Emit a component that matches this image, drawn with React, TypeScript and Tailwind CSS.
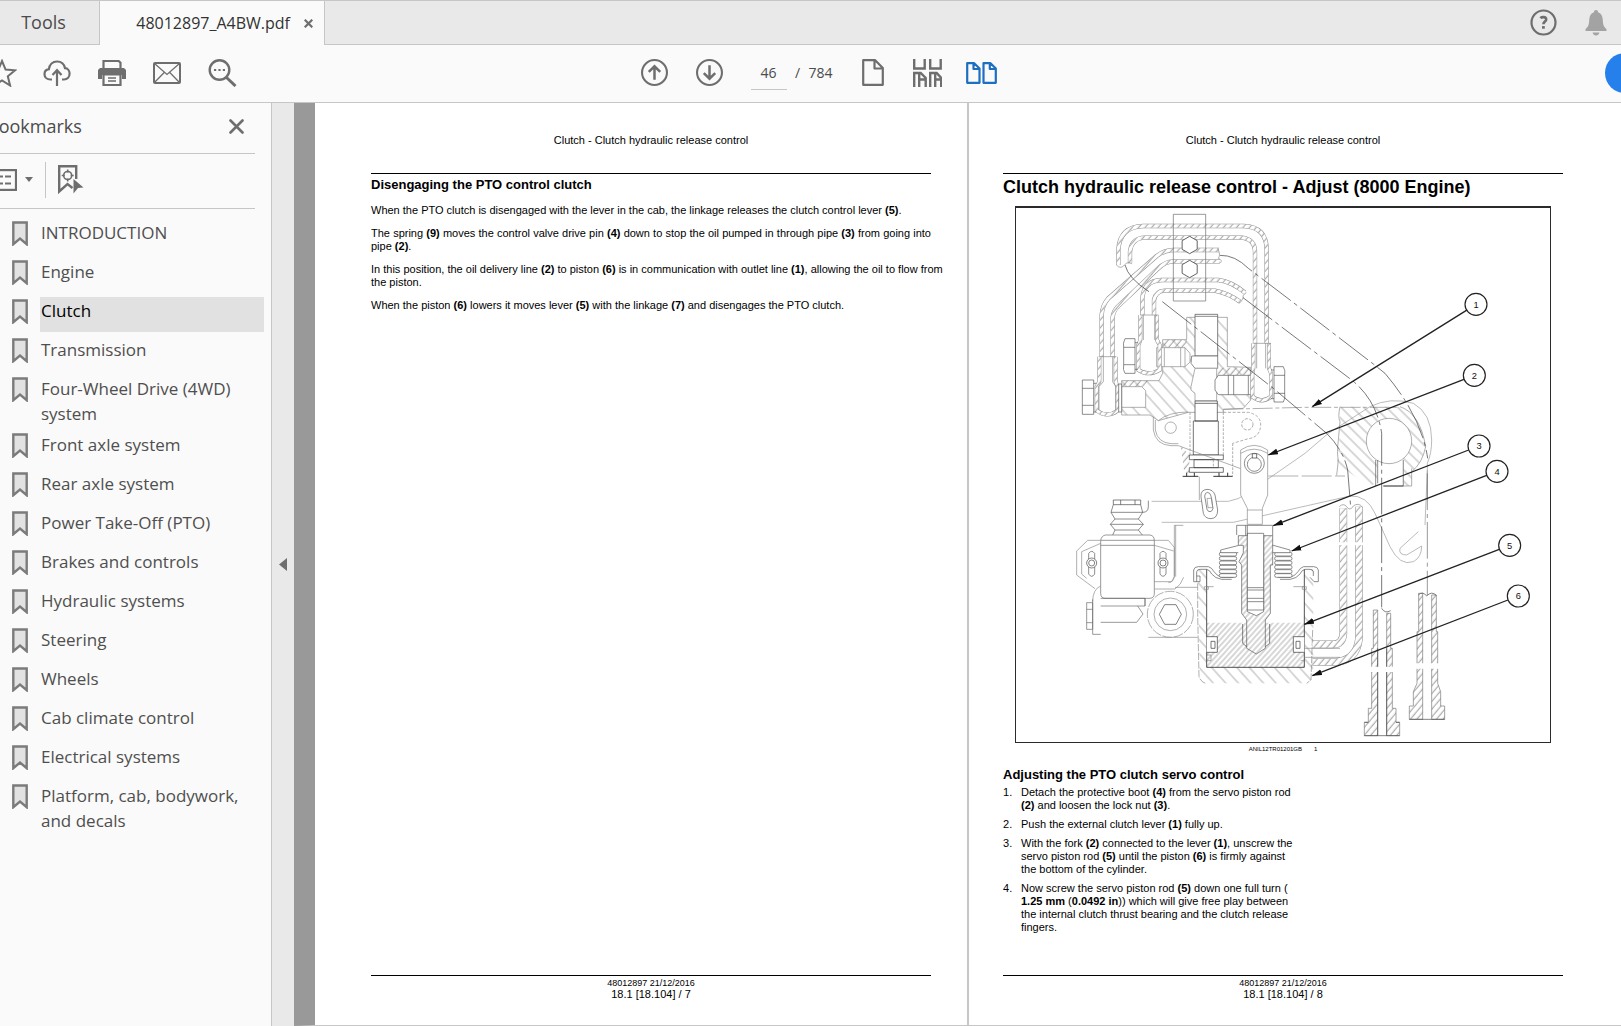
import type { ReactNode } from "react"

const BOOKMARKS = [
  "INTRODUCTION",
  "Engine",
  "Clutch",
  "Transmission",
  "Four-Wheel Drive (4WD) system",
  "Front axle system",
  "Rear axle system",
  "Power Take-Off (PTO)",
  "Brakes and controls",
  "Hydraulic systems",
  "Steering",
  "Wheels",
  "Cab climate control",
  "Electrical systems",
  "Platform, cab, bodywork, and decals",
]

const CALLOUTS = [
  { n: 1, x: 1383, y: 313, tx: 892, ty: 620 },
  { n: 2, x: 1378, y: 526, tx: 760, ty: 765 },
  { n: 3, x: 1392, y: 738, tx: 775, ty: 977 },
  { n: 4, x: 1446, y: 814, tx: 830, ty: 1053 },
  { n: 5, x: 1484, y: 1036, tx: 868, ty: 1273 },
  { n: 6, x: 1510, y: 1188, tx: 892, ty: 1427 },
]

function IconButton({ label, className = "", children }: { label: string; className?: string; children: ReactNode }) {
  return (
    <button type="button" aria-label={label} className={`flex shrink-0 items-center justify-center text-[#6e6e6e] ${className}`}>
      {children}
    </button>
  )
}

function TabBar() {
  return (
    <div className="flex h-[45px] shrink-0 border-y border-[#c6c6c6] bg-[#e9e9e9]">
      <button type="button" className="w-[100px] border-r border-[#c6c6c6] pr-3 text-center text-[18px] text-[#4b4b4b]">
        Tools
      </button>
      <div className="-mb-px flex w-[225px] items-center justify-end gap-[14px] border-r border-[#c6c6c6] bg-[#fafafa] pr-[11px]">
        <span className="text-[16px] text-[#323232]">48012897_A4BW.pdf</span>
        <IconButton label="Close tab">
          <svg width="9" height="9" viewBox="0 0 9 9" stroke="currentColor" strokeWidth="2.2"><path d="M.7.7l7.6 7.6M8.300.7L.7 8.300" /></svg>
        </IconButton>
      </div>
      <div className="ml-auto flex items-center gap-7 pr-[14px]">
        <IconButton label="Help">
          <svg width="27" height="27" viewBox="0 0 27 27" fill="none" stroke="currentColor" strokeWidth="2.2">
            <circle cx="13.5" cy="13.5" r="12" />
            <path d="M10.4 9.2c1.2-1.3 5.6-1.9 5.8 1.1.1 2.2-2.8 2.3-2.8 5" strokeWidth="2.6" />
            <path d="M12 18.4h2.8" strokeWidth="2.6" />
          </svg>
        </IconButton>
        <IconButton label="Notifications">
          <svg width="22" height="26" viewBox="0 0 22 26" fill="#a3a3a3">
            <path d="M11 0c1.300 0 2 .9 2 2.200 3.200 1 4.600 3.600 4.800 7.800.2 5.200 1 6.600 3.700 9V21H.5v-2c2.700-2.400 3.500-3.800 3.700-9C4.400 5.800 5.800 3.200 9 2.200 9 .9 9.700 0 11 0z" />
            <path d="M7.500 22.500h7c-.6 2-1.800 3-3.500 3s-2.900-1-3.500-3z" />
          </svg>
        </IconButton>
      </div>
    </div>
  )
}

function Toolbar() {
  return (
    <div className="flex h-[58px] shrink-0 items-center overflow-hidden border-b border-[#c6c6c6] bg-[#fafafa] pb-[2px]">
      <div className="flex flex-1">
        <div className="-ml-[26px] flex">
          <IconButton label="Add to favourites" className="w-[55px]">
            <svg width="30" height="28" viewBox="0 0 30 28" fill="none" stroke="currentColor" strokeWidth="2">
              <path d="M15 2l3.600 8.600 9.400.7-7.200 6 2.300 9.200L15 21.500l-8.100 5 2.300-9.200-7.200-6 9.400-.7z" />
            </svg>
          </IconButton>
          <IconButton label="Upload" className="w-[55px]">
            <svg width="28" height="28" viewBox="0 0 28 28" fill="none" stroke="currentColor" strokeWidth="2.200">
              <path d="M9 20.500H7.500C4 20.500 1.500 18.200 1.500 15.200c0-2.800 2-4.700 4.400-5C6.500 5.500 9.800 2.500 14 2.500c4 0 7.200 2.500 8 6.700 2.700.2 4.600 2.500 4.600 5.400 0 3.200-2.300 5.900-5.600 5.900h-2" />
              <path d="M14 27V11.500M9.500 16l4.500-4.800 4.500 4.800" />
            </svg>
          </IconButton>
          <IconButton label="Print" className="w-[55px]">
            <svg width="28" height="28" viewBox="0 0 28 28" fill="none" stroke="currentColor" strokeWidth="2.200">
              <path d="M5.500 9V2h15.200l1.800 1.800V9" />
              <path d="M2 9h24l2 2v9h-4v-4H4v4H0v-9z" fill="currentColor" stroke="none" />
              <path d="M5.500 15.500V26h17V15.500z" fill="#fafafa" />
              <path d="M10 19h8M10 22h8" strokeWidth="1.300" />
            </svg>
          </IconButton>
          <IconButton label="Email" className="w-[55px]">
            <svg width="28" height="22" viewBox="0 0 28 22" fill="none" stroke="currentColor">
              <rect x="1" y="1" width="26" height="20" rx="1" strokeWidth="2" />
              <path d="M1.500 1.500L14 12.500l12.500-11M1.500 20.500l9.700-10M26.500 20.500l-9.700-10" strokeWidth="1.300" />
            </svg>
          </IconButton>
          <IconButton label="Find" className="w-[57px]">
            <svg width="29" height="28" viewBox="0 0 29 28" fill="none" stroke="currentColor">
              <circle cx="11.500" cy="11" r="9.800" strokeWidth="2.400" />
              <path d="M18.500 18.500l9 8.500" strokeWidth="3" />
              <path d="M6 11h2.200M10.400 11h2.200M14.800 11H17" strokeWidth="2" />
            </svg>
          </IconButton>
        </div>
      </div>

      <div className="flex items-center gap-7 pl-4">
        <IconButton label="Previous page">
          <svg width="27" height="27" viewBox="0 0 26 26" fill="none" stroke="currentColor" strokeWidth="2">
            <circle cx="13" cy="13" r="12" />
            <path d="M13 20V7.500M7.500 12.500L13 7l5.500 5.500" strokeWidth="2.400" />
          </svg>
        </IconButton>
        <IconButton label="Next page">
          <svg width="27" height="27" viewBox="0 0 26 26" fill="none" stroke="currentColor" strokeWidth="2">
            <circle cx="13" cy="13" r="12" />
            <path d="M13 6v12.500M7.500 13.500L13 19l5.500-5.500" strokeWidth="2.400" />
          </svg>
        </IconButton>
        <div className="flex w-[82px] items-center justify-between text-[14px] text-[#4b4b4b]">
          <input aria-label="Page number" defaultValue="46" className="h-[35px] w-[36px] border-b border-[#c6c6c6] bg-transparent text-center" />
          <span>/</span>
          <span>784</span>
        </div>
        <IconButton label="Single page" className="w-6">
          <svg width="22" height="27" viewBox="0 0 22 27" fill="none" stroke="currentColor" strokeWidth="2.200" strokeLinejoin="round">
            <path d="M1.200 1.200h12L20.800 9v16.800H1.200zM12.500 1.500v8h8" />
          </svg>
        </IconButton>
        <IconButton label="Two page scrolling">
          <svg width="29" height="28" viewBox="0 0 29 28" fill="none" stroke="currentColor" strokeWidth="2.400">
            <path d="M1.200 0v9.500h10.500V0M17.200 0v9.500h10.500V0M1.200 28V14h6.500l5 5v9M6.200 28V14.500M6.500 20.500h5.500M17.200 28V14h6.500l4.500 5v9M22.200 28V14.500M22.500 20.500h5" />
          </svg>
        </IconButton>
        <button type="button" aria-label="Two page view" aria-pressed="true" className="-ml-1 text-[#1d6fc0]">
          <svg width="31" height="22" viewBox="0 0 31 22" fill="none" stroke="currentColor" strokeWidth="2.200" strokeLinejoin="round">
            <path d="M1.200 1.200h7L13.500 6.500v14.300H1.200zM7.500 1.500V7h6M17.500 1.200h7l5.300 5.300v14.300H17.500zM23.800 1.500V7h6" />
          </svg>
        </button>
      </div>

      <div className="flex flex-1 justify-end">
        <button type="button" aria-label="Share" className="-mr-6 size-10 rounded-full bg-[#2680eb]" />
      </div>
    </div>
  )
}

function Sidebar() {
  return (
    <aside className="w-[271px] shrink-0 overflow-hidden bg-[#fafafa] pr-[7px]">
      <div className="mr-[9px] flex h-[51px] items-center justify-between border-b border-[#c6c6c6] pr-[11px] pb-[3px]">
        <h2 className="-ml-[13px] text-[18px] text-[#4b4b4b]">Bookmarks</h2>
        <IconButton label="Close bookmarks">
          <svg width="15" height="15" viewBox="0 0 15 15" stroke="currentColor" strokeWidth="2.600" strokeLinecap="round"><path d="M1.500 1.500l12 12M13.500 1.500l-12 12" /></svg>
        </IconButton>
      </div>
      <div className="mr-[9px] flex h-[55px] items-center border-b border-[#c6c6c6] pb-[3px]">
        <IconButton label="Bookmark options" className="-ml-2 h-9 gap-2 border-r border-[#c6c6c6] pr-3">
          <svg width="25" height="22" viewBox="0 0 25 22" fill="none" stroke="currentColor" strokeWidth="2.200">
            <rect x="1" y="1.100" width="23" height="19.800" />
            <path d="M7 7.500h4M13 7.500h6M7 14.500h4M13 14.500h6" />
          </svg>
          <svg width="8" height="5" viewBox="0 0 8 5" fill="currentColor"><path d="M0 0h8L4 5z" /></svg>
        </IconButton>
        <IconButton label="Find current bookmark" className="ml-3">
          <svg width="26" height="29" viewBox="0 0 26 29" fill="none" stroke="currentColor">
            <path d="M18.200 14V1.200h-17V26.500L9.500 19l5 4" strokeWidth="2.400" />
            <circle cx="9.700" cy="10.500" r="4" strokeWidth="1.600" />
            <path d="M9.700 4.500v3M9.700 13.500v3M3.700 10.500h3M12.700 10.500h3" strokeWidth="1.600" />
            <path d="M15.500 14L25.500 22.500l-5.500.5-4.500 5.500z" fill="currentColor" stroke="none" />
          </svg>
        </IconButton>
      </div>

      <ul className="flex flex-col gap-1 pt-[10px]">
        {BOOKMARKS.map((name) => (
          <li key={name} className="flex min-h-[35px] pl-3">
            <svg width="16" height="25" viewBox="0 0 16 25" className="mt-[2px] shrink-0" fill="#e2e2e2" stroke="#7b7b7b" strokeWidth="2.400">
              <path d="M1.300 1.500h13.400v21.700L8 17.500l-6.700 5.700z" />
            </svg>
            <a
              href="#bookmark"
              className={
                name === "Clutch"
                  ? "ml-3 flex-1 bg-[#e1e1e1] py-px pl-px text-[17px] leading-[25px] text-black"
                  : "ml-3 flex-1 py-px pl-px text-[17px] leading-[25px] text-[#4f4f4f]"
              }
            >
              {name}
            </a>
          </li>
        ))}
      </ul>
    </aside>
  )
}

// pipe wall in section: outlined band filled with hatching
function Wall({ d, w = 13 }: { d: string; w?: number }) {
  return (
    <g fill="none">
      <path d={d} stroke="#8c8c8c" strokeWidth={w} />
      <path d={d} stroke="#fff" strokeWidth={w - 3} />
      <path d={d} stroke="url(#fine)" strokeWidth={w - 3} />
    </g>
  )
}

function Hex({ x, y, r }: { x: number; y: number; r: number }) {
  const h = r / 2
  const k = r * 0.87
  return <path d={`M${x} ${y - r}l${k} ${h}v${r}l${-k} ${h}l${-k} ${-h}v${-r}z`} fill="#fff" stroke="#444" strokeWidth="2.5" />
}

function Diagram() {
  return (
    <svg viewBox="3 24 1602 1602" className="block aspect-square w-full" fill="none" stroke="#888" strokeWidth="2" role="img" aria-label="PTO clutch servo control, sectional view">
      <defs>
        <pattern id="fine" width="15" height="15" patternUnits="userSpaceOnUse" patternTransform="rotate(40)">
          <path d="M7 0v15" stroke="#777" strokeWidth="2.200" />
        </pattern>
        <pattern id="mid" width="12" height="12" patternUnits="userSpaceOnUse" patternTransform="rotate(42)">
          <path d="M6 0v12" stroke="#777" strokeWidth="1.800" />
        </pattern>
        <pattern id="back" width="24" height="24" patternUnits="userSpaceOnUse" patternTransform="rotate(-45)">
          <path d="M12 0v24" stroke="#888" strokeWidth="2" />
        </pattern>
        <pattern id="wide" width="28" height="28" patternUnits="userSpaceOnUse" patternTransform="rotate(-42)">
          <path d="M14 0v28" stroke="#888" strokeWidth="2" />
        </pattern>
        <marker id="arrow" viewBox="0 0 30 20" refX="29" refY="10" markerWidth="30" markerHeight="20" markerUnits="userSpaceOnUse" orient="auto">
          <path d="M30 10L0 1v18z" fill="#111" stroke="none" />
        </marker>
      </defs>

      {/* clamp and pipes */}
      <Wall d="M310 195V150Q314 80 385 78H685Q755 80 755 150V430" />
      <Wall d="M345 190V155Q350 114 390 113H680Q720 117 720 157V430" />
      <Wall d="M260 470V345Q262 315 280 295L425 168Q450 150 475 150H612" />
      <Wall d="M293 470V352Q295 332 310 318L430 205Q452 184 475 184H615" />
      <Wall d="M382 345V295Q386 242 440 240H610Q650 245 690 278" />
      <Wall d="M417 345V300Q422 273 450 272H600Q640 280 675 305" />
      <path d="M304 195q14 14 24 0q12 -12 22 -4M608 145q10 20 2 30q14 6 6 14M694 278q-14 8 -10 16q-4 12 -12 16" />
      <path d="M475 43h97v260h-97z" stroke="#666" />
      <Hex x={524} y={135} r={26} />
      <Hex x={524} y={207} r={26} />

      {/* valve body */}
      <path d="M320 542H432L443 520V419H515V352H637V500L707 502V600L685 625L625 628V637H520L430 662L405 645H320z" fill="url(#wide)" />
      <path d="M443 419H515V443H443zM497 737L523 765V818H508zM608 503H707V526H608zM320 542H400L390 560H320z" fill="url(#fine)" stroke="none" />
      <path d="M320 560H380L392 572V622H320zM425 443H510L525 460V486L510 500H425zM448 443V500M497 443V500M510 443V500" fill="#fff" />
      <path d="M540 343H608V468H540z" fill="#fff" stroke="#444" />
      <path d="M540 349H608M530 468H608V505H540L528 490z" fill="#fff" stroke="#555" />
      <path d="M540 505H605V603H540V580L528 570V560Z" fill="#fff" />
      <path d="M610 526H713V584H610L600 570V540zM640 526V584M656 526V584M700 526V584" fill="#fff" stroke="#555" />
      <path d="M540 603H607V663H540zM535 663H610V765H535zM540 610H607" fill="#fff" stroke="#333" />
      <path d="M523 765H625V779H523zM537 779H610V803H537zM523 803H625V817H523z" fill="#fff" stroke="#333" />
      <path d="M525 637V765M625 637V765M653 730V828M595 779V803" strokeDasharray="8 4" />
      <path d="M503 829H550M595 829H653M515 818V829M538 818V829M612 818V829M638 818V829" stroke="#333" strokeWidth="3" />

      {/* left fittings */}
      <Wall d="M253 470V545L245 560V632Q278 655 308 632V560L302 545V470" w={12} />
      <path d="M253 470H302M265 470V545L252 560V630M293 470V545L302 560V630" />
      <path d="M236 540H202V643H236zM202 565H236M202 616H236M236 550H244M236 636H244M311 552H320V636H311z" fill="#fff" stroke="#555" />
      <Wall d="M376 345V420L370 435V510Q400 530 434 510V435L426 420V345" w={12} />
      <path d="M376 345H430M385 345V420M419 345V420" />
      <path d="M360 416H330Q323 430 326 442V494Q323 510 330 520H360zM326 442H360M326 494H360M360 428H368M360 508H368" fill="#fff" stroke="#555" />

      {/* right fitting */}
      <Wall d="M715 430V505L712 520V590Q740 612 768 590V520L762 505V430" w={12} />
      <path d="M715 430H768M725 430V505M752 430V505" />
      <path d="M777 500H805Q812 512 809 526V580Q812 594 805 606H777zM777 526H810M777 580H810M768 510H777M768 596H777" fill="#fff" stroke="#555" />

      {/* flange and lever */}
      <path d="M415 650V690Q422 735 468 737H490L677 806M430 662Q460 636 520 636" />
      <path d="M421 660V690Q428 728 468 731H490" />
      <circle cx="467" cy="683" r="17" />
      <circle cx="697" cy="673" r="17" strokeDasharray="10 4" />
      <path d="M625 637H700Q737 645 737 675Q735 712 700 716L653 730" strokeDasharray="9 5" />
      <path d="M625 628L870 622H975H1150" strokeDasharray="60 8 12 8" />
      <path d="M760 828H990" strokeDasharray="90 10" />
      <path d="M410 904H640Q670 900 700 878L870 760L940 700L1065 620Q1125 590 1195 610Q1250 640 1250 720Q1250 760 1237 790V900" stroke="#999" />
      <path d="M440 967H655L1005 888Q1055 885 1080 940L1125 1040Q1155 1100 1195 1085Q1220 1072 1220 1038L1175 1065Q1150 1065 1155 1045L1210 995M1237 810L1230 975" stroke="#999" />
      <path d="M553 830V900" />

      {/* pivot boss */}
      <path d="M975 620H1155Q1215 640 1232 740Q1222 790 1190 815V858H1165V780H1087V850L1060 858L965 790L975 700z" fill="url(#back)" stroke="none" />
      <path d="M975 620Q968 650 975 665L970 720Q965 760 970 780L965 826M1190 805V858H1165V780V858" />
      <path d="M1105 858H1165" stroke="#222" strokeWidth="3" />
      <path d="M1155 620Q1215 640 1232 740Q1222 790 1190 815" />
      <circle cx="1122" cy="723" r="68" fill="#fff" />
      <path d="M1082 780V858M1088 780V850" stroke="#555" />

      {/* hidden control lines */}
      <g stroke="#333" strokeDasharray="110 12 12 12">
        <path d="M615 166Q660 165 700 205L825 300L1075 492L1110 520Q1220 650 1238 775" />
        <path d="M684 293L825 400L1010 540Q1085 600 1100 700V1222" />
        <path d="M442 305L775 565L935 700Q985 750 998 810L1007 920" />
        <path d="M1237 820V1185" stroke="#666" />
      </g>
      <path d="M330 195Q340 235 402 275" stroke="#333" />

      {/* fork and link */}
      <path d="M677 885V750Q717 722 758 750V885L742 925V973H697V925z" fill="#fff" />
      <path d="M677 760Q717 735 758 760M697 930H742" />
      <circle cx="718" cy="790" r="30" stroke="#555" />
      <circle cx="718" cy="793" r="21" stroke="#555" />
      <path d="M712 761h13v13h-13z" fill="#fff" stroke="#333" />
      <path d="M558 890Q556 870 576 868Q594 868 600 885L608 930Q608 955 588 956Q570 956 565 940zM569 888Q570 878 577 877Q586 878 588 888L594 925Q592 935 585 935Q578 935 576 928z" fill="#fff" stroke="#555" />
      <path d="M576 895h14l3 28h-14z" />

      <g transform="translate(0 810)">
        {/* solenoid */}
        <path d="M295 90H377V104H295zM317 90V104M360 90V104" stroke="#444" />
        <path d="M295 104L288 127L300 147L286 163L300 180L293 195M377 104L383 127L370 147L385 163L370 180L382 195M288 127H383M300 147H370M286 163H385M300 180H370M383 127Q400 127 400 110V92" stroke="#555" />
        <path d="M272 195H405Q418 197 418 212V370Q418 384 405 385H270Q257 384 257 370V212Q259 197 272 195zM257 211H418M257 226H418" stroke="#666" />
        <path d="M257 211H218L185 243V315L240 356M257 220L200 245V312L215 325M418 211H460L478 232V320L470 335H418M418 226L476 243" />
        <path d="M221 250Q230 238 239 250V312Q230 326 221 312zM435 250Q444 238 453 250V312Q444 326 435 312z" stroke="#555" />
        <circle cx="230" cy="279" r="15" fill="#fff" stroke="#444" />
        <circle cx="230" cy="279" r="9" stroke="#444" />
        <circle cx="444" cy="279" r="15" fill="#fff" stroke="#444" />
        <circle cx="444" cy="279" r="9" stroke="#444" />
        <path d="M505 166H478V320Q475 337 460 338M482 166V320M420 357H480Q498 345 506 322M257 348Q233 358 233 395M480 352H548" />
        <path d="M215 398H233V478H215zM215 418H233M215 458H233M233 388V493H257M257 385H390V408H257M257 457H365L384 432L368 408M390 385V408" stroke="#666" />
        <circle cx="466" cy="433" r="69" strokeDasharray="30 4" />
        <circle cx="466" cy="433" r="49" />
        <path d="M449 404H483L499 433L483 463H449L433 433z" stroke="#444" />
        <path d="M400 502H548" />

        {/* servo cylinder */}
        <path d="M548 298H575V592H868V298H895V592L888 630L875 640H570L555 630z" fill="url(#wide)" stroke="none" />
        <path d="M548 340V430L552 620Q560 640 575 640M895 298M893 480L888 630L875 640" strokeDasharray="22 4" />
        <path d="M575 458H868V592H575z" fill="url(#mid)" stroke="none" />
        <path d="M575 298V592H868V298" stroke="#333" strokeWidth="2.500" />
        <path d="M575 350H596M835 350H868M568 350h12v8h-12zM862 350h12v8h-12z" />
        <path d="M575 500H607V547H575M588 514H600V535H588zM868 500H835V547H868M855 514H843V535H855z" fill="#fff" stroke="#333" />
        <path d="M575 555H588V572H575M868 572H857" />
        <path d="M536 335V300Q538 290 550 290H580Q590 292 597 305Q605 317 620 322H655M545 335V305Q547 298 555 298H575Q585 300 590 312Q600 325 620 328H650M536 335H555V318H545" stroke="#555" />
        <path d="M910 335V300Q908 290 896 290H866Q856 292 849 305Q841 317 826 322H790M895 318V305Q893 298 885 298H870Q860 300 855 312Q845 325 826 328H795M910 335H897L885 322" stroke="#555" />

        {/* return springs */}
        <g stroke="#555" fill="#fff">
          {[247, 260, 273, 286, 299, 311].map((y) => (
            <g key={y}>
              <rect x="613" y={y} width="52" height="11" rx="5" />
              <rect x="779" y={y} width="52" height="11" rx="5" />
            </g>
          ))}
          <path d="M617 240L672 226H685V248H617zM825 240L775 226H760V248H825z" />
        </g>

        {/* piston rod */}
        <path d="M670 197H773V285H766V430L751 450V535L724 552L695 535V450L680 430V285H670z" fill="#fff" stroke="none" />
        <path d="M670 197H697V425L724 437L746 425V197H773V285H766V430L751 450V535L724 552L695 535V450L680 430V285L672 275L685 248V226H670z" fill="url(#mid)" stroke="#555" />
        <path d="M697 190H746V420H697zM697 353H746M697 360H746M697 385H746M697 395H746" fill="#fff" stroke="#555" />
        <path d="M683 462V520L695 530M764 462V520L751 530" stroke="#444" />
        <path d="M665 166H773V197M665 166V195M692 166V197M697 166V197" stroke="#555" />
      </g>

      <g transform="translate(825 810)">
        {/* delivery pipe */}
        <Wall d="M160 115V490Q158 523 130 523H67" w={23} />
        <Wall d="M207 110V505Q200 575 130 576H67" w={23} />
        <path d="M148 110Q160 98 170 110Q180 125 190 108Q205 96 218 112M43 535H150M43 562H150" />

        {/* union bolts */}
        <g fill="url(#fine)" stroke="#777">
          <path d="M250 420V535H245V715H235V757H223V797H263V420zM302 430V535H307V715H318V757H329V797H290V430z" />
          <path d="M386 370V485H381V640L370 665V708H358V748H398V370zM439 375V485H443V640L452 665V708H464V748H425V375z" />
        </g>
        <path d="M223 797H329M358 748H464M263 535V797M290 535V797M223 757H235M318 757H329M385 375Q398 362 410 378Q425 362 439 376M275 415Q285 432 302 422" stroke="#444" />
        <path d="M145 217H222V226H145zM240 590H312V606H240zM376 580H448V596H376z" fill="#fff" stroke="none" />
      </g>

      {CALLOUTS.map((c) => (
        <g key={c.n} stroke="#222" strokeWidth="4">
          <path d={`M${c.x} ${c.y}L${c.tx} ${c.ty}`} markerEnd="url(#arrow)" />
          <circle cx={c.x} cy={c.y} r="33" fill="#fff" strokeWidth="3.500" />
          <text x={c.x} y={c.y + 10} textAnchor="middle" fontSize="28" fill="#111" stroke="none">{c.n}</text>
        </g>
      ))}
    </svg>
  )
}

// one typeset line, spread over the full measure
function Line({ children }: { children: ReactNode }) {
  return <span className="block whitespace-nowrap [text-align-last:justify]">{children}</span>
}

function Step({ n, children }: { n: number; children: ReactNode }) {
  return (
    <li className="flex">
      <span className="w-[18px] shrink-0">{n}.</span>
      <div className="min-w-0 flex-1">{children}</div>
    </li>
  )
}

function Page({ number, className, children }: { number: number; className: string; children: ReactNode }) {
  return (
    <article className={`flex min-w-0 flex-1 flex-col bg-white text-[11px] leading-[13px] text-black ${className}`}>
      <header className="border-b border-black pt-[31px] pb-[26px] text-center">Clutch - Clutch hydraulic release control</header>
      {children}
      <footer className="mt-auto mb-[25px] border-t border-black pt-px text-center">
        <p className="text-[9px] leading-[12px]">48012897 21/12/2016</p>
        <p className="leading-[11px]">18.1 [18.104] / {number}</p>
      </footer>
    </article>
  )
}

export default function App() {
  return (
    <div className="flex h-screen flex-col overflow-hidden font-['Open_Sans','Noto_Sans',sans-serif]">
      <TabBar />
      <Toolbar />
      <div className="flex min-h-0 flex-1">
        <Sidebar />
        <IconButton label="Collapse panel" className="w-[23px] border-l border-[#c6c6c6] bg-[#e9e9e9]">
          <svg width="8" height="13" viewBox="0 0 8 13" fill="currentColor"><path d="M8 0v13L0 6.500z" /></svg>
        </IconButton>
        <main className="flex min-w-0 flex-1 border-b border-l-[21px] border-b-[#c6c6c6] border-l-[#999] font-['Liberation_Sans',Arial,sans-serif]">
          <Page number={7} className="pr-9 pl-14">
            <h2 className="pt-[3px] text-[13px] leading-[16px] font-bold">Disengaging the PTO control clutch</h2>
            <div className="flex flex-col gap-[10px] pt-[11px]">
              <p>When the PTO clutch is disengaged with the lever in the cab, the linkage releases the clutch control lever <b>(5)</b>.</p>
              <p>
                <Line>The spring <b>(9)</b> moves the control valve drive pin <b>(4)</b> down to stop the oil pumped in through pipe <b>(3)</b> from going into</Line>
                pipe <b>(2)</b>.
              </p>
              <p>
                <Line>In this position, the oil delivery line <b>(2)</b> to piston <b>(6)</b> is in communication with outlet line <b>(1)</b>, allowing the oil to flow from</Line>
                the piston.
              </p>
              <p>When the piston <b>(6)</b> lowers it moves lever <b>(5)</b> with the linkage <b>(7)</b> and disengages the PTO clutch.</p>
            </div>
          </Page>
          <div className="w-[2px] shrink-0 bg-[#c6c6c6]" />
          <Page number={8} className="pr-[58px] pl-[34px]">
            <h1 className="pt-1 text-[18px] leading-[18px] font-bold">Clutch hydraulic release control - Adjust (8000 Engine)</h1>
            <figure className="mx-3 mt-[10px]">
              <div className="border border-t-2 border-[#2b2b2b]">
                <Diagram />
              </div>
              <figcaption className="flex justify-center gap-3 text-[6px] leading-[12px]">
                <span>ANIL12TR01201GB</span>
                <span>1</span>
              </figcaption>
            </figure>
            <h2 className="pt-3 text-[13px] leading-[16px] font-bold">Adjusting the PTO clutch servo control</h2>
            <ol className="flex w-[280px] flex-col gap-[6px] pt-[3px]">
              <Step n={1}>
                <Line>Detach the protective boot <b>(4)</b> from the servo piston rod</Line>
                <b>(2)</b> and loosen the lock nut <b>(3)</b>.
              </Step>
              <Step n={2}>
                Push the external clutch lever <b>(1)</b> fully up.
              </Step>
              <Step n={3}>
                <Line>With the fork <b>(2)</b> connected to the lever <b>(1)</b>, unscrew the</Line>
                <Line>servo piston rod <b>(5)</b> until the piston <b>(6)</b> is firmly against</Line>
                the bottom of the cylinder.
              </Step>
              <Step n={4}>
                <Line>Now screw the servo piston rod <b>(5)</b> down one full turn (</Line>
                <Line><b>1.25 mm</b> (<b>0.0492 in</b>)) which will give free play between</Line>
                <Line>the internal clutch thrust bearing and the clutch release</Line>
                fingers.
              </Step>
            </ol>
          </Page>
        </main>
      </div>
    </div>
  )
}
